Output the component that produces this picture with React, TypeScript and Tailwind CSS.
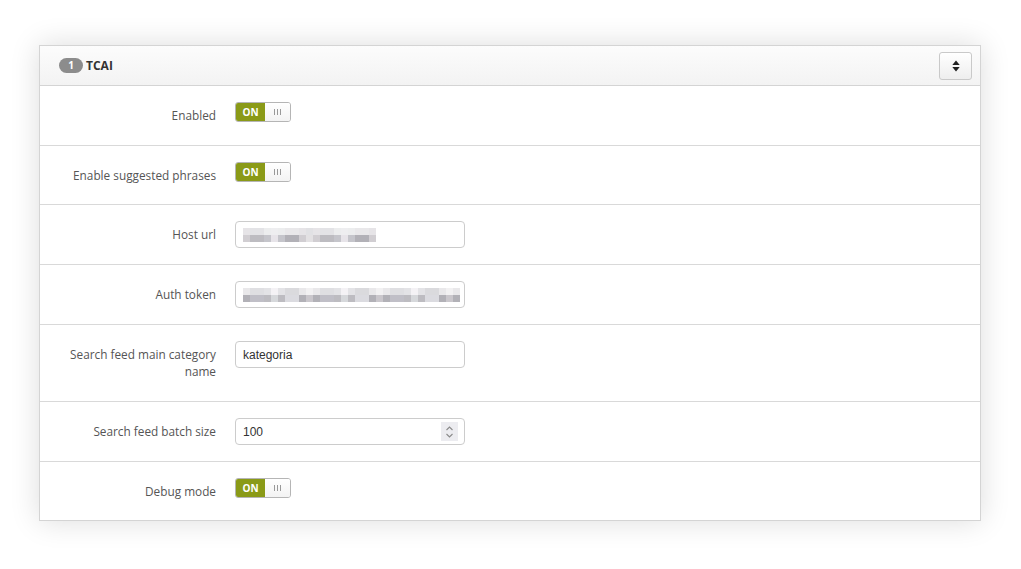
import React from "react";

const Toggle = () => (
  <div className="flex h-[20px] w-[56px] overflow-hidden rounded-[3px] border border-[#b5b5b5]">
    <div className="flex w-[29px] items-center justify-center bg-[#8a9a17] text-[10px] font-bold text-white">ON</div>
    <div className="flex flex-1 items-center justify-center gap-[2px] bg-gradient-to-b from-white to-[#f3f3f3]">
      <span className="h-[6px] w-[1px] bg-[#999]" />
      <span className="h-[6px] w-[1px] bg-[#999]" />
      <span className="h-[6px] w-[1px] bg-[#999]" />
    </div>
  </div>
);

const shades = ["#d9d9de", "#c7c4c9", "#b9b8be", "#e6e3e8", "#cfcbd0", "#bdbcc4", "#d4d6d9", "#aeadb3", "#e2dfe2", "#c2c2c8"];

const Blur = ({ cols, seed }: { cols: number; seed: number }) => {
  const rows = [0, 1];
  return (
    <div className="flex flex-col blur-[0.6px]">
      {rows.map((r) => (
        <div key={r} className="flex">
          {Array.from({ length: cols }).map((_, i) => {
            const c = shades[(i * 7 + r * 3 + seed + ((i * i) % 5)) % shades.length];
            const light = r === 0 ? 0.45 : 0.95;
            return <span key={i} className="h-[7px] w-[7px]" style={{ backgroundColor: c, opacity: light }} />;
          })}
        </div>
      ))}
    </div>
  );
};

const Input = ({ children, spinner }: { children?: React.ReactNode; spinner?: boolean }) => (
  <div className="flex h-[27px] w-[230px] items-center rounded-[4px] border border-[#cccccc] bg-white pl-[7px] pr-[6px] text-[12px] text-[#333] [font-family:'Liberation_Sans',Arial,sans-serif]">
    <div className="flex-1">{children}</div>
    {spinner && (
      <div className="flex h-[19px] w-[17px] flex-col items-center justify-center bg-[#ececf0]">
        <svg width="9" height="14" viewBox="0 0 9 14" fill="none" stroke="#8a8a8a" strokeWidth="1.1">
          <path d="M1.5 5 L4.5 2 L7.5 5" />
          <path d="M1.5 9 L4.5 12 L7.5 9" />
        </svg>
      </div>
    )}
  </div>
);

const Row = ({ label, children, h, last }: { label: React.ReactNode; children: React.ReactNode; h: string; last?: boolean }) => (
  <div className={`flex pt-[16px] ${h} ${last ? "" : "border-b border-[#d9d9d9]"}`}>
    <div className="w-[176px] pt-[5px] text-right text-[11.8px] leading-[17px] text-[#555]">{label}</div>
    <div className="ml-[19px]">{children}</div>
  </div>
);

export default function App() {
  return (
    <div className="min-h-[569px] w-[1021px] bg-white pl-[39px] pt-[45px] [font-family:'Open_Sans',sans-serif]">
      <div className="w-[942px] border border-[#d4d4d4] bg-white shadow-[0_0_28px_rgba(0,0,0,0.14)]">
        <div className="flex h-[40px] items-center justify-between border-b border-[#d4d4d4] bg-gradient-to-b from-[#fcfcfc] to-[#f3f3f3] pl-[19px] pr-[8px]">
          <div className="flex items-center gap-[3px]">
            <span className="flex h-[15px] w-[24px] items-center justify-center rounded-full bg-[#8c8c8c] text-[10px] font-bold text-white">1</span>
            <span className="text-[12px] font-bold text-[#333]">TCAI</span>
          </div>
          <div className="flex h-[28px] w-[33px] items-center justify-center rounded-[3px] border border-[#c9c9c9] bg-gradient-to-b from-white to-[#eeeeee]">
            <svg width="8" height="12" viewBox="0 0 8 12">
              <path d="M4 0.5 L7.7 5 H0.3 Z" fill="#222" />
              <path d="M4 11.5 L7.7 7 H0.3 Z" fill="#222" />
            </svg>
          </div>
        </div>
        <Row label="Enabled" h="min-h-[60px]">
          <Toggle />
        </Row>
        <Row label="Enable suggested phrases" h="min-h-[59px]">
          <Toggle />
        </Row>
        <Row label="Host url" h="min-h-[60px]">
          <Input>
            <Blur cols={19} seed={1} />
          </Input>
        </Row>
        <Row label="Auth token" h="min-h-[60px]">
          <Input>
            <Blur cols={31} seed={4} />
          </Input>
        </Row>
        <Row label={<>Search feed main category<br />name</>} h="min-h-[77px]">
          <Input>kategoria</Input>
        </Row>
        <Row label="Search feed batch size" h="min-h-[60px]">
          <Input spinner>100</Input>
        </Row>
        <Row label="Debug mode" h="min-h-[58px]" last>
          <Toggle />
        </Row>
      </div>
    </div>
  );
}
